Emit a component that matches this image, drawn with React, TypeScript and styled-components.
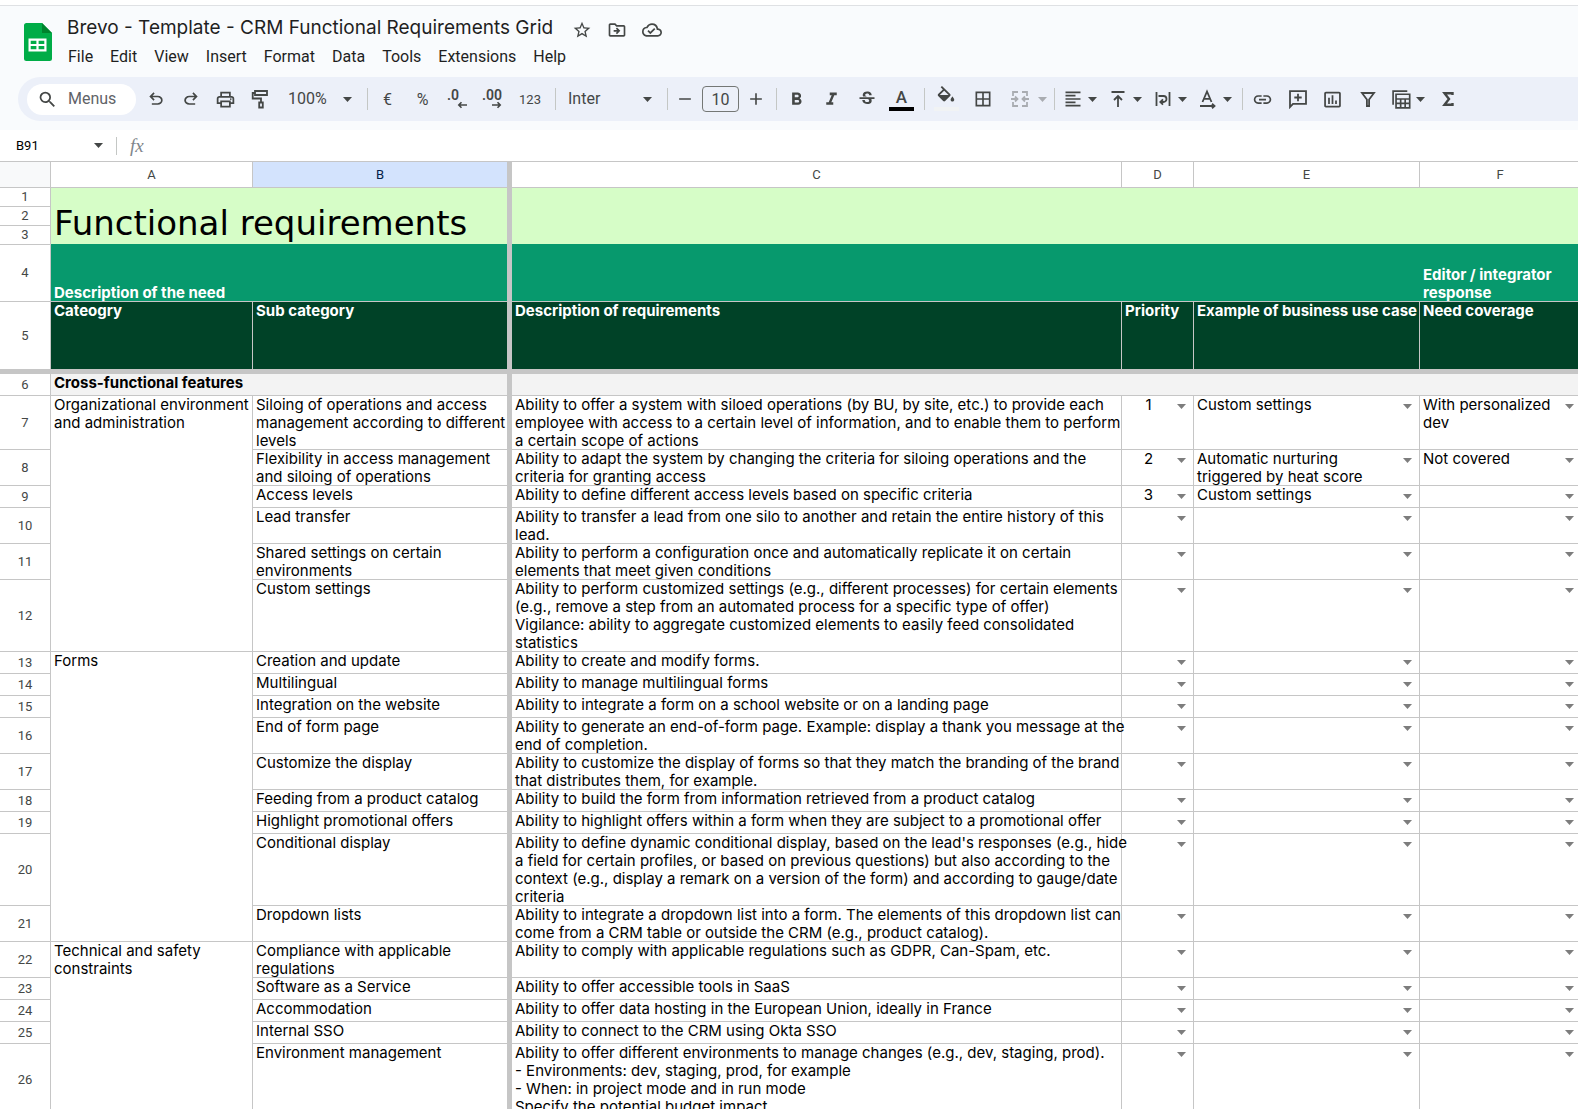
import React from "react";
import styled, { createGlobalStyle, css } from "styled-components";
import {
  MdStarBorder,
  MdOutlineDriveFileMove,
  MdOutlineCloudDone,
  MdSearch,
  MdOutlinePrint,
  MdFormatBold,
  MdFormatItalic,
  MdStrikethroughS,
  MdBorderAll,
  MdFormatAlignLeft,
  MdLink,
  MdInsertChartOutlined,
} from "react-icons/md";

const color = {
  ink: "#444746",
  text: "#1f1f1f",
  chrome: "#f9fbfd",
  toolbar: "#ecf0f9",
  line: "#c6c6c6",
  mint: "#d6fdc7",
  green: "#07996d",
  forest: "#004227",
  section: "#f3f3f3",
};
const uiFont = `Roboto, "Liberation Sans", sans-serif`;
const sheetFont = `Inter, "Liberation Sans", sans-serif`;

const GlobalStyle = createGlobalStyle`
  * { box-sizing: border-box; }
  html, body, #root { height: 100%; }
  body { margin: 0; background: #fff; color: ${color.text}; font-family: ${uiFont}; overflow: hidden; }
  button, input, select { font: inherit; color: inherit; border: 0; margin: 0; padding: 0; background: none; outline: none; }
  svg { display: block; flex: none; }
`;

const Page = styled.div`
  display: flex;
  flex-direction: column;
  height: 100%;
  overflow: hidden;
`;

/* ---------- header ---------- */

const Header = styled.header`
  flex: none;
  margin-top: 5px;
  padding: 8px 0 9px;
  border-top: 1px solid #dfe1e4;
  background: ${color.chrome};
`;

const TitleArea = styled.div`
  display: flex;
  gap: 6px;
  padding-left: 24px;
  height: 63px;
`;

const Logo = styled.a`
  display: block;
  padding-top: 9px;
`;

const TitleLines = styled.div`
  display: flex;
  flex-direction: column;
`;

const DocRow = styled.div`
  display: flex;
  align-items: center;
  height: 28px;
  padding-left: 9px;
  color: ${color.ink};
`;

const DocTitle = styled.h1`
  margin: 0 11px 0 0;
  font-size: 19px;
  line-height: 24px;
  font-weight: 400;
  font-family: ${sheetFont};
  color: ${color.text};
  white-space: nowrap;
`;

const DocAction = styled.button`
  display: flex;
  align-items: center;
  justify-content: center;
  width: 35px;
  height: 24px;
  padding-top: 4px;
`;

const MenuBar = styled.nav`
  display: flex;
  gap: 1px;
  margin-top: 3px;
  padding-left: 2px;
`;

const MenuItem = styled.button`
  padding: 0 8px;
  font-size: 16px;
  line-height: 24px;
`;

/* ---------- toolbar ---------- */

const Toolbar = styled.div`
  display: flex;
  align-items: center;
  gap: 4px;
  height: 44px;
  margin-left: 18px;
  padding-left: 9px;
  border-radius: 22px 0 0 22px;
  background: ${color.toolbar};
  color: ${color.ink};
  overflow: hidden;
`;

const MenuSearch = styled.label`
  display: flex;
  align-items: center;
  gap: 10px;
  flex: none;
  width: 109px;
  height: 31px;
  padding-left: 10px;
  border-radius: 16px;
  background: #fff;
  input {
    width: 60px;
    font-size: 16px;
    line-height: 20px;
  }
  input::placeholder { color: #5f6368; opacity: 1; }
`;

const Tool = styled.button<{ $w?: number; $small?: boolean }>`
  display: flex;
  align-items: center;
  justify-content: center;
  flex: none;
  width: ${(p) => p.$w ?? 31}px;
  height: 31px;
  font-size: ${(p) => (p.$small ? 13 : 16)}px;
  color: ${color.ink};
`;

const SplitTool = styled(Tool)<{ $faded?: boolean }>`
  width: ${(p) => p.$w ?? 41}px;
  justify-content: space-between;
  padding: ${(p) => (p.$faded ? "0 0 0 8px" : "0 3px 0 4px")};
  color: ${(p) => (p.$faded ? "#a9acb1" : color.ink)};
`;

const Swatch = styled.span<{ $color: string }>`
  display: flex;
  flex-direction: column;
  align-items: center;
  justify-content: flex-end;
  width: 25px;
  height: 24px;
  border-bottom: 4px solid ${(p) => p.$color};
  font-size: 17px;
  line-height: 20px;
  font-weight: 500;
`;

const Divider = styled.span`
  flex: none;
  width: 1px;
  height: 22px;
  margin-left: 3px;
  background: #c4c7c5;
`;

const SelectBox = styled.label<{ $w: number }>`
  display: flex;
  align-items: center;
  flex: none;
  width: ${(p) => p.$w}px;
  padding: 0 8px;
  select {
    flex: 1;
    min-width: 0;
    appearance: none;
    font-size: 16px;
    line-height: 20px;
  }
`;

const SizeInput = styled.input`
  && {
    flex: none;
    width: 37px;
    height: 26px;
    border: 1px solid #747775;
    border-radius: 4px;
    font-size: 16px;
    text-align: center;
  }
`;

/* ---------- formula bar ---------- */

const FormulaBar = styled.div`
  display: flex;
  align-items: center;
  flex: none;
  height: 32px;
  border-bottom: 1px solid ${color.line};
  background: #fff;
  color: ${color.ink};
`;

const NameBox = styled.input`
  && {
    width: 78px;
    margin-left: 16px;
    font-size: 13px;
    color: #000;
  }
`;

const FormulaDivider = styled(Divider)`
  height: 18px;
  margin: 0 13px;
`;

const FormulaIcon = styled.span`
  font: italic 400 19px "Liberation Serif", serif;
  color: #80868b;
`;

const FormulaInput = styled.input`
  flex: 1;
  height: 28px;
`;

/* ---------- grid ---------- */

const GridArea = styled.main`
  flex: 1;
  min-height: 0;
  margin-right: -3px;
  overflow: hidden;
`;

const Grid = styled.table`
  width: 100%;
  table-layout: fixed;
  border-collapse: separate;
  border-spacing: 0;
  font-family: ${sheetFont};
  font-size: 15px;
  line-height: 18px;
  color: #000;
`;

const heading = css`
  padding: 0;
  font-family: ${uiFont};
  font-size: 13px;
  line-height: 18px;
  font-weight: 400;
  color: ${color.ink};
  border: 0 solid ${color.line};
  border-width: 0 1px 1px 0;
`;

const ColumnHead = styled.th<{ $frozen?: boolean; $active?: boolean; $corner?: boolean }>`
  ${heading}
  height: 26px;
  background: ${(p) => (p.$active ? "#d3e3fd" : p.$corner ? "#f8f9fa" : "#fff")};
  color: ${(p) => (p.$active ? "#041e49" : color.ink)};
  border-right-width: ${(p) => (p.$frozen ? 5 : 1)}px;
`;

const RowHead = styled.th<{ $frozen?: boolean }>`
  ${heading}
  line-height: 17px;
  padding-bottom: 1px;
  background: #fff;
  border-bottom-width: ${(p) => (p.$frozen ? 5 : 1)}px;
`;

type Tone = "plain" | "mint" | "green" | "forest" | "section";
const tones: Record<Tone, ReturnType<typeof css>> = {
  plain: css`background: #fff;`,
  mint: css`background: ${color.mint}; box-shadow: inset 0 -1px ${color.green}; border-bottom-width: 0;`,
  green: css`background: ${color.green}; color: #fff; font-weight: 700; vertical-align: bottom;`,
  forest: css`background: ${color.forest}; color: #fff; font-weight: 700; border-bottom-width: 5px;`,
  section: css`background: ${color.section}; font-weight: 700;`,
};

const Cell = styled.td<{ $tone?: Tone; $frozen?: boolean; $open?: boolean }>`
  padding: 0 0 0 3px;
  vertical-align: top;
  text-align: left;
  white-space: pre;
  border: 0 solid ${color.line};
  border-bottom-width: 1px;
  border-right-width: ${(p) => (p.$frozen ? 5 : p.$open ? 0 : 1)}px;
  ${(p) => tones[p.$tone ?? "plain"]}
`;

const Row = styled.tr<{ $h?: number }>`
  height: ${(p) => p.$h ?? 22}px;
`;

const CellText = styled.div`
  margin-bottom: -1px;
`;

const SheetTitle = styled.div`
  font-family: "DejaVu Sans", sans-serif;
  font-size: 34px;
  line-height: 42px;
  padding-top: 14px;
`;

const CellSelect = styled.button<{ $center?: boolean }>`
  display: flex;
  align-items: flex-start;
  width: 100%;
  margin-bottom: -1px;
  padding-right: 7px;
  text-align: ${(p) => (p.$center ? "center" : "left")};
  white-space: pre;
  span {
    flex: 1;
    min-height: 18px;
    padding-right: ${(p) => (p.$center ? 5 : 0)}px;
  }
  svg { margin-top: 8px; }
`;

/* ---------- icons ---------- */

const Caret = ({ tint = color.ink }: { tint?: string }) => (
  <svg width="9" height="5" viewBox="0 0 9 5" aria-hidden="true">
    <path d="M0 0h9L4.5 5z" fill={tint} />
  </svg>
);

const Stroke = ({ children, size = 20, w = 1.8 }: { children: React.ReactNode; size?: number; w?: number }) => (
  <svg width={size} height={size} viewBox="0 0 20 20" fill="none" stroke="currentColor" strokeWidth={w} aria-hidden="true">
    {children}
  </svg>
);

const Symbol = ({ d, size = 20 }: { d: string; size?: number }) => (
  <svg width={size} height={size} viewBox="0 -960 960 960" fill="currentColor" aria-hidden="true">
    <path d={d} />
  </svg>
);

const undoPath =
  "M280-200v-80h284q63 0 109.500-40T720-420q0-60-46.500-100T564-560H312l104 104-56 56-200-200 200-200 56 56-104 104h252q97 0 169.500 63T800-420q0 94-72.500 157T564-200H280Z";
const redoPath =
  "M396-200q-97 0-169.500-63T154-420q0-94 72.500-157T396-640h252L544-744l56-56 200 200-200 200-56-56 104-104H396q-63 0-109.500 40T240-420q0 60 46.500 100T396-280h284v80H396Z";

const SheetsLogo = () => (
  <svg width="28" height="38" viewBox="0 0 28 38" role="img" aria-label="Sheets">
    <path d="M2.500 0H18l10 10v25.500a2.500 2.500 0 0 1-2.500 2.500h-23A2.500 2.500 0 0 1 0 35.500v-33A2.500 2.500 0 0 1 2.500 0z" fill="#00ac47" />
    <path d="M18 0l10 10H18z" fill="#00832d" />
    <path d="M4.500 15.500h18v13h-18zM6.700 17.700v3.200h5.700v-3.200zM14.600 17.700v3.200h5.700v-3.200zM6.700 23.100v3.200h5.700v-3.200zM14.600 23.100v3.200h5.700v-3.200z" fill="#fff" fillRule="evenodd" />
  </svg>
);

const PaintRoller = () => (
  <Stroke>
    <path d="M4 2h12v4H4zM4 4H1.700v5.500H10V13M8.200 13.500h3.600v5H8.200z" />
  </Stroke>
);

const DecimalIcon = ({ digits, forward }: { digits: string; forward?: boolean }) => (
  <svg width="22" height="24" viewBox="0 -2 22 24" overflow="visible" aria-hidden="true">
    <text x="0" y="11" fontSize="14" fontWeight="600" fontFamily="Roboto, sans-serif" fill="currentColor">
      {digits}
    </text>
    <path
      d={forward ? "M10 16h8M15.500 13.300l2.700 2.700-2.700 2.700" : "M20 16h-8M14.500 13.300L11.800 16l2.700 2.700"}
      fill="none"
      stroke="currentColor"
      strokeWidth="1.600"
    />
  </svg>
);

const Bucket = () => (
  <svg width="22" height="22" viewBox="0 -1 24 24" fill="currentColor" aria-hidden="true">
    <path d="M16.560 8.940L7.620 0 6.210 1.410l2.380 2.380-5.150 5.150a1.490 1.490 0 0 0 0 2.120l5.500 5.500c.29.29.68.44 1.060.44s.77-.15 1.060-.44l5.500-5.500c.59-.58.59-1.530 0-2.120zM5.210 10L10 5.210 14.790 10H5.210zM19 11.500s-2 2.170-2 3.500c0 1.100.9 2 2 2s2-.9 2-2c0-1.330-2-3.500-2-3.500z" />
  </svg>
);

const MergeIcon = () => (
  <Stroke>
    <path d="M8 3H3v4M8 17H3v-4M12 3h5v4M12 17h5v-4M1 10h6M5 7.500L7.500 10 5 12.500M19 10h-6M15 7.500L12.500 10l2.500 2.500" />
  </Stroke>
);

const AlignTopIcon = () => (
  <Stroke>
    <path d="M3.500 3h13M10 18V7M6 11l4-4 4 4" />
  </Stroke>
);

const WrapIcon = () => (
  <Stroke>
    <path d="M3.500 3v14M16.500 3v14M5.500 7h5a2.800 2.800 0 0 1 0 6H8M10 10.300L7.300 13l2.700 2.700" />
  </Stroke>
);

const RotateIcon = () => (
  <Stroke>
    <path d="M4.500 13L9 2.500 13.500 13M6 9.800h6M2 17h14M14 14.800l2.500 2.200-2.500 2.200" />
  </Stroke>
);

const CommentIcon = () => (
  <Stroke>
    <path d="M2 18V2.200h16v12.600H5zM10 4.800v7.400M6.300 8.500h7.400" />
  </Stroke>
);

const FilterIcon = () => (
  <Stroke>
    <path d="M4 4h12l-4.900 6.500V17H8.900v-6.500z" />
  </Stroke>
);

const TableViewIcon = () => (
  <Stroke size={21} w={1.6}>
    <path d="M2 15V2h13.500M4.800 5h13v13h-13zM4.800 9.500h13M4.800 13.700h13M9.200 9.500V18M13.500 9.500V18" />
  </Stroke>
);

const SigmaIcon = () => (
  <Stroke w={2.4}>
    <path d="M14.500 6V4.200H6.500L11 10l-4.500 5.800h8V14" />
  </Stroke>
);

/* ---------- data ---------- */

type RequirementRow = {
  n: number;
  category?: [string, number];
  sub: string;
  need: string;
  priority?: string;
  example?: string;
  coverage?: string;
};

const rows: RequirementRow[] = [
  { n: 7, category: ["Organizational environment\nand administration", 6], sub: "Siloing of operations and access\nmanagement according to different\nlevels", need: "Ability to offer a system with siloed operations (by BU, by site, etc.) to provide each\nemployee with access to a certain level of information, and to enable them to perform\na certain scope of actions", priority: "1", example: "Custom settings", coverage: "With personalized\ndev" },
  { n: 8, sub: "Flexibility in access management\nand siloing of operations", need: "Ability to adapt the system by changing the criteria for siloing operations and the\ncriteria for granting access", priority: "2", example: "Automatic nurturing\ntriggered by heat score", coverage: "Not covered" },
  { n: 9, sub: "Access levels", need: "Ability to define different access levels based on specific criteria", priority: "3", example: "Custom settings" },
  { n: 10, sub: "Lead transfer", need: "Ability to transfer a lead from one silo to another and retain the entire history of this\nlead." },
  { n: 11, sub: "Shared settings on certain\nenvironments", need: "Ability to perform a configuration once and automatically replicate it on certain\nelements that meet given conditions" },
  { n: 12, sub: "Custom settings", need: "Ability to perform customized settings (e.g., different processes) for certain elements\n(e.g., remove a step from an automated process for a specific type of offer)\nVigilance: ability to aggregate customized elements to easily feed consolidated\nstatistics" },
  { n: 13, category: ["Forms", 9], sub: "Creation and update", need: "Ability to create and modify forms." },
  { n: 14, sub: "Multilingual", need: "Ability to manage multilingual forms" },
  { n: 15, sub: "Integration on the website", need: "Ability to integrate a form on a school website or on a landing page" },
  { n: 16, sub: "End of form page", need: "Ability to generate an end-of-form page. Example: display a thank you message at the\nend of completion." },
  { n: 17, sub: "Customize the display", need: "Ability to customize the display of forms so that they match the branding of the brand\nthat distributes them, for example." },
  { n: 18, sub: "Feeding from a product catalog", need: "Ability to build the form from information retrieved from a product catalog" },
  { n: 19, sub: "Highlight promotional offers", need: "Ability to highlight offers within a form when they are subject to a promotional offer" },
  { n: 20, sub: "Conditional display", need: "Ability to define dynamic conditional display, based on the lead's responses (e.g., hide\na field for certain profiles, or based on previous questions) but also according to the\ncontext (e.g., display a remark on a version of the form) and according to gauge/date\ncriteria" },
  { n: 21, sub: "Dropdown lists", need: "Ability to integrate a dropdown list into a form. The elements of this dropdown list can\ncome from a CRM table or outside the CRM (e.g., product catalog)." },
  { n: 22, category: ["Technical and safety\nconstraints", 5], sub: "Compliance with applicable\nregulations", need: "Ability to comply with applicable regulations such as GDPR, Can-Spam, etc." },
  { n: 23, sub: "Software as a Service", need: "Ability to offer accessible tools in SaaS" },
  { n: 24, sub: "Accommodation", need: "Ability to offer data hosting in the European Union, ideally in France" },
  { n: 25, sub: "Internal SSO", need: "Ability to connect to the CRM using Okta SSO" },
  { n: 26, sub: "Environment management", need: "Ability to offer different environments to manage changes (e.g., dev, staging, prod).\n- Environments: dev, staging, prod, for example\n- When: in project mode and in run mode\nSpecify the potential budget impact" },
];

const menus = ["File", "Edit", "View", "Insert", "Format", "Data", "Tools", "Extensions", "Help"];

const Dropdown = ({ value, label, center }: { value?: string; label: string; center?: boolean }) => (
  <CellSelect type="button" aria-haspopup="listbox" aria-label={value ? undefined : label} $center={center}>
    <span>{value}</span>
    <Caret tint="#7d7d7d" />
  </CellSelect>
);

export default function App() {
  return (
    <Page>
      <GlobalStyle />
      <Header>
        <TitleArea>
          <Logo href="#home" aria-label="Sheets home"><SheetsLogo /></Logo>
          <TitleLines>
            <DocRow>
              <DocTitle>Brevo - Template - CRM Functional Requirements Grid</DocTitle>
              <DocAction aria-label="Star"><MdStarBorder size={20} /></DocAction>
              <DocAction aria-label="Move"><MdOutlineDriveFileMove size={20} /></DocAction>
              <DocAction aria-label="Saved to Drive"><MdOutlineCloudDone size={20} /></DocAction>
            </DocRow>
            <MenuBar>
              {menus.map((m) => <MenuItem key={m}>{m}</MenuItem>)}
            </MenuBar>
          </TitleLines>
        </TitleArea>

        <Toolbar role="toolbar" aria-label="Main">
          <MenuSearch>
            <MdSearch size={21} />
            <input placeholder="Menus" aria-label="Menus" />
          </MenuSearch>
          <Tool aria-label="Undo"><Symbol d={undoPath} /></Tool>
          <Tool aria-label="Redo"><Symbol d={redoPath} /></Tool>
          <Tool aria-label="Print"><MdOutlinePrint size={21} /></Tool>
          <Tool aria-label="Paint format"><PaintRoller /></Tool>
          <SelectBox $w={80}>
            <select aria-label="Zoom"><option>100%</option></select>
            <Caret />
          </SelectBox>
          <Divider />
          <Tool aria-label="Format as currency">€</Tool>
          <Tool aria-label="Format as percent">%</Tool>
          <Tool aria-label="Decrease decimal places"><DecimalIcon digits=".0" /></Tool>
          <Tool aria-label="Increase decimal places"><DecimalIcon digits=".00" forward /></Tool>
          <Tool aria-label="More formats" $w={36} $small>123</Tool>
          <Divider />
          <SelectBox $w={100}>
            <select aria-label="Font"><option>Inter</option></select>
            <Caret />
          </SelectBox>
          <Divider />
          <Tool aria-label="Decrease font size" $w={26}><Stroke size={18}><path d="M3.500 10h13" /></Stroke></Tool>
          <SizeInput defaultValue="10" aria-label="Font size" />
          <Tool aria-label="Increase font size" $w={26}><Stroke size={18}><path d="M3.500 10h13M10 3.500v13" /></Stroke></Tool>
          <Divider />
          <Tool aria-label="Bold"><MdFormatBold size={21} /></Tool>
          <Tool aria-label="Italic"><MdFormatItalic size={21} /></Tool>
          <Tool aria-label="Strikethrough"><MdStrikethroughS size={20} /></Tool>
          <Tool aria-label="Text color"><Swatch $color="#000">A</Swatch></Tool>
          <Divider />
          <Tool aria-label="Fill color" $w={34}><Swatch $color="#f1f3f4"><Bucket /></Swatch></Tool>
          <Tool aria-label="Borders"><MdBorderAll size={20} /></Tool>
          <SplitTool aria-label="Merge cells" $w={45} $faded><MergeIcon /><Caret tint="#a9acb1" /></SplitTool>
          <Divider />
          <SplitTool aria-label="Horizontal align"><MdFormatAlignLeft size={20} /><Caret /></SplitTool>
          <SplitTool aria-label="Vertical align"><AlignTopIcon /><Caret /></SplitTool>
          <SplitTool aria-label="Text wrapping"><WrapIcon /><Caret /></SplitTool>
          <SplitTool aria-label="Text rotation"><RotateIcon /><Caret /></SplitTool>
          <Divider />
          <Tool aria-label="Insert link"><MdLink size={21} /></Tool>
          <Tool aria-label="Insert comment"><CommentIcon /></Tool>
          <Tool aria-label="Insert chart"><MdInsertChartOutlined size={21} /></Tool>
          <Tool aria-label="Create a filter"><FilterIcon /></Tool>
          <SplitTool aria-label="Table views"><TableViewIcon /><Caret /></SplitTool>
          <Tool aria-label="Functions"><SigmaIcon /></Tool>
        </Toolbar>
      </Header>

      <FormulaBar>
        <NameBox defaultValue="B91" aria-label="Name box" />
        <Caret />
        <FormulaDivider />
        <FormulaIcon aria-hidden="true">fx</FormulaIcon>
        <FormulaInput aria-label="Formula" />
      </FormulaBar>

      <GridArea>
        <Grid>
          <colgroup>
            <col width={51} />
            <col width={202} />
            <col width={259} />
            <col width={610} />
            <col width={72} />
            <col width={226} />
            <col />
          </colgroup>
          <thead>
            <tr>
              <ColumnHead $corner />
              <ColumnHead>A</ColumnHead>
              <ColumnHead $active $frozen>B</ColumnHead>
              <ColumnHead>C</ColumnHead>
              <ColumnHead>D</ColumnHead>
              <ColumnHead>E</ColumnHead>
              <ColumnHead>F</ColumnHead>
            </tr>
          </thead>
          <tbody>
            <Row $h={19}>
              <RowHead>1</RowHead>
              <Cell $tone="mint" $frozen colSpan={2} rowSpan={3}><SheetTitle>Functional requirements</SheetTitle></Cell>
              <Cell $tone="mint" $open colSpan={4} rowSpan={3} />
            </Row>
            <Row $h={19}><RowHead>2</RowHead></Row>
            <Row $h={19}><RowHead>3</RowHead></Row>
            <Row $h={57}>
              <RowHead>4</RowHead>
              <Cell $tone="green" $frozen colSpan={2}><CellText>Description of the need</CellText></Cell>
              <Cell $tone="green" $open colSpan={3} />
              <Cell $tone="green" $open><CellText>{"Editor / integrator\nresponse"}</CellText></Cell>
            </Row>
            <Row $h={72}>
              <RowHead $frozen>5</RowHead>
              <Cell $tone="forest">Cateogry</Cell>
              <Cell $tone="forest" $frozen>Sub category</Cell>
              <Cell $tone="forest">Description of requirements</Cell>
              <Cell $tone="forest">Priority</Cell>
              <Cell $tone="forest">Example of business use case</Cell>
              <Cell $tone="forest" $open>Need coverage</Cell>
            </Row>
            <Row>
              <RowHead>6</RowHead>
              <Cell $tone="section" $frozen colSpan={2}>Cross-functional features</Cell>
              <Cell $tone="section" $open colSpan={4} />
            </Row>
            {rows.map((r) => (
              <Row key={r.n}>
                <RowHead>{r.n}</RowHead>
                {r.category && <Cell rowSpan={r.category[1]}><CellText>{r.category[0]}</CellText></Cell>}
                <Cell $frozen><CellText>{r.sub}</CellText></Cell>
                <Cell><CellText>{r.need}</CellText></Cell>
                <Cell><Dropdown value={r.priority} label="Priority" center /></Cell>
                <Cell><Dropdown value={r.example} label="Example of business use case" /></Cell>
                <Cell $open><Dropdown value={r.coverage} label="Need coverage" /></Cell>
              </Row>
            ))}
          </tbody>
        </Grid>
      </GridArea>
    </Page>
  );
}
